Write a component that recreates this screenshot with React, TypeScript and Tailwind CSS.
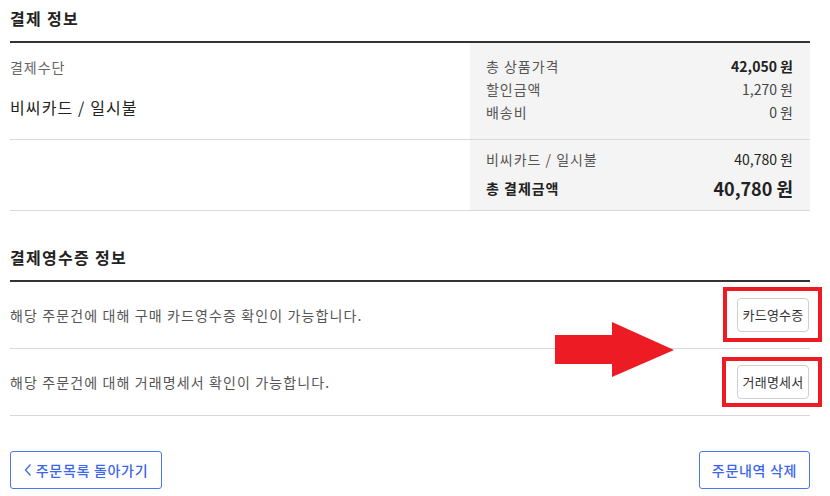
import React from "react";

const font = { fontFamily: '"Noto Sans CJK KR", "Noto Sans", sans-serif' };

function PriceRow({ label, value, bold }: { label: string; value: string; bold?: boolean }) {
  return (
    <div className="flex items-center justify-between h-[23px] text-[14px]">
      <span className="text-[#555] tracking-[0.07em]">{label}</span>
      <span className={bold ? "font-bold text-[#222]" : "text-[#444]"}>{value}</span>
    </div>
  );
}

function ReceiptRow({ text, button }: { text: string; button: string }) {
  return (
    <div className="flex items-center justify-between h-[67px] border-b border-[#d9d9d9]">
      <p className="text-[14px] text-[#555] tracking-[0.08em]">{text}</p>
      <button className="shrink-0 h-[34px] w-[72px] mr-[1px] rounded-[4px] border border-[#cfcfcf] bg-white text-[13px] tracking-[0.02em] text-[#333]">
        {button}
      </button>
    </div>
  );
}

export default function App() {
  return (
    <div className="relative w-[830px] h-[496px] bg-white pl-[10px] pr-[20px] overflow-hidden" style={font}>
      {/* 결제 정보 */}
      <div className="h-[41px] flex items-center pb-[6px]">
        <h2 className="text-[16px] font-bold text-[#222] tracking-[0.08em]">결제 정보</h2>
      </div>
      <div className="border-t-2 border-[#333]" />

      <div className="grid grid-cols-[460px_340px] border-b border-[#d9d9d9]">
        <div className="pt-[14px]">
          <p className="text-[14px] leading-[20px] text-[#666] tracking-[0.07em]">결제수단</p>
          <p className="mt-[19px] text-[16px] leading-[22px] text-[#222] tracking-[0.07em]">비씨카드 / 일시불</p>
        </div>
        <div className="bg-[#f4f4f4] pl-[16px] pr-[17px] pt-[12px] pb-[15px]">
          <PriceRow label="총 상품가격" value="42,050 원" bold />
          <PriceRow label="할인금액" value="1,270 원" />
          <PriceRow label="배송비" value="0 원" />
        </div>
      </div>

      <div className="grid grid-cols-[460px_340px] border-b border-[#d9d9d9]">
        <div />
        <div className="bg-[#f4f4f4] pl-[16px] pr-[17px] pt-[9px] pb-[9px]">
          <div className="flex items-center justify-between h-[20px] text-[14px]">
            <span className="text-[#555] tracking-[0.07em]">비씨카드 / 일시불</span>
            <span className="text-[#222]">40,780 원</span>
          </div>
          <div className="flex items-center justify-between h-[26px] mt-[6px]">
            <span className="text-[14px] font-bold text-[#222] tracking-[0.07em]">총 결제금액</span>
            <span className="text-[18px] font-bold text-[#222]">40,780 원</span>
          </div>
        </div>
      </div>

      {/* 결제영수증 정보 */}
      <div className="mt-[28px] h-[41px] flex items-center pb-[6px]">
        <h2 className="text-[16px] font-bold text-[#222] tracking-[0.08em]">결제영수증 정보</h2>
      </div>
      <div className="border-t-2 border-[#333]" />
      <ReceiptRow text="해당 주문건에 대해 구매 카드영수증 확인이 가능합니다." button="카드영수증" />
      <ReceiptRow text="해당 주문건에 대해 거래명세서 확인이 가능합니다." button="거래명세서" />

      <div className="mt-[35px] flex justify-between">
        <button className="h-[38px] w-[152px] flex items-center justify-center gap-[4px] rounded-[3px] border border-[#4a76f0] text-[14px] font-medium text-[#3a66ee] tracking-[0.05em]">
          <svg width="8" height="14" viewBox="0 0 8 14" fill="none">
            <path d="M6.5 1.5 L1.5 7 L6.5 12.5" stroke="#3a66ee" strokeWidth="1.3" />
          </svg>
          주문목록 돌아가기
        </button>
        <button className="h-[38px] w-[111px] rounded-[3px] border border-[#4a76f0] text-[14px] font-medium text-[#3a66ee] tracking-[0.05em]">
          주문내역 삭제
        </button>
      </div>

      {/* annotation overlay */}
      <div className="absolute left-[723px] top-[287px] w-[99px] h-[55px] border-4 border-[#ed1c24]" />
      <div className="absolute left-[722px] top-[357px] w-[100px] h-[50px] border-4 border-[#ed1c24]" />
      <svg className="absolute left-[555px] top-[322px]" width="120" height="56" viewBox="0 0 120 56">
        <polygon points="0,13 57,13 57,0 119,28 57,55 57,42 0,42" fill="#ed1c24" />
      </svg>
    </div>
  );
}
